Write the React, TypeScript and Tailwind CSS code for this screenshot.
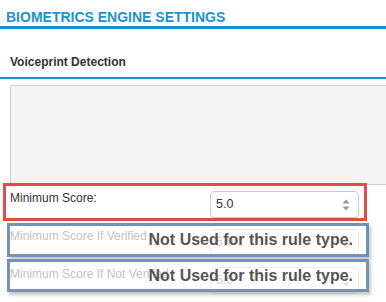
import React from "react";

const Spinner = ({ faded }: { faded?: boolean }) => (
  <svg width="8" height="12" viewBox="0 0 8 12" className="shrink-0">
    <path d="M4 0.5 L7.5 4.5 L0.5 4.5 Z" fill={faded ? "#e2e2e2" : "#9a9a9a"} />
    <path d="M0.5 7.5 L7.5 7.5 L4 11.5 Z" fill={faded ? "#e2e2e2" : "#9a9a9a"} />
  </svg>
);

const ScoreInput = ({ faded }: { faded?: boolean }) => (
  <div
    className={`ml-auto mt-[5px] flex h-[27px] w-[149px] items-center rounded-[4px] border bg-white pl-[5px] pr-[8px] text-[12.5px] ${
      faded ? "border-[#ececec] text-[#d0d0d0]" : "border-[#cccccc] text-[#333]"
    }`}
  >
    <span className="flex-1">5.0</span>
    <Spinner faded={faded} />
  </div>
);

const NotUsed = ({ className }: { className: string }) => (
  <div
    className={`absolute left-[1px] flex w-[362px] items-center justify-end border-[3px] border-[#7591b4] pr-[13px] shadow-[2px_3px_3px_rgba(0,0,0,0.22)] ${className}`}
  >
    <span className="text-[16px] font-bold leading-[18px] text-[#555]">
      Not Used for this rule type.
    </span>
  </div>
);

export default function App() {
  return (
    <div className="h-[302px] w-[386px] overflow-hidden bg-white font-['Liberation_Sans',Arial,sans-serif]">
      <h2 className="px-[6px] pt-[9px] text-[14px] font-bold leading-[16px] text-[#1b93cf]">
        BIOMETRICS ENGINE SETTINGS
      </h2>
      <div className="mt-[1px] h-[3px] bg-[#0f93c8]" />

      <h3 className="mt-[25px] px-[10px] text-[12px] font-bold leading-[16px] text-[#333]">
        Voiceprint Detection
      </h3>
      <div className="mt-[7px] h-[2px] bg-[#1796c9]" />

      <div className="ml-[10px] mt-[6px] h-[100px] w-[400px] border border-[#d0d0d0] bg-[#f5f5f5]" />

      <div className="relative z-10 -mt-[2px] ml-[3px] w-[364px]">
        <div className="flex h-[38px] border-[3px] border-[#e34b4b] bg-white pl-[4px] pr-[5px]">
          <span className="pt-[4px] text-[12px] leading-[16px] text-[#333]">
            Minimum Score:
          </span>
          <ScoreInput />
        </div>

        <div className="relative flex h-[38px] border-[3px] border-transparent pl-[4px] pr-[5px]">
          <span className="pt-[4px] text-[12px] leading-[16px] text-[#c2c2c2]">
            Minimum Score If Verified
          </span>
          <ScoreInput faded />
          <NotUsed className="-top-[1px] h-[34px]" />
        </div>

        <div className="relative flex h-[38px] border-[3px] border-transparent pl-[4px] pr-[5px]">
          <span className="pt-[4px] text-[12px] leading-[16px] text-[#c2c2c2]">
            Minimum Score If Not Verified
          </span>
          <ScoreInput faded />
          <NotUsed className="-top-[3px] h-[33px]" />
        </div>
      </div>
    </div>
  );
}
